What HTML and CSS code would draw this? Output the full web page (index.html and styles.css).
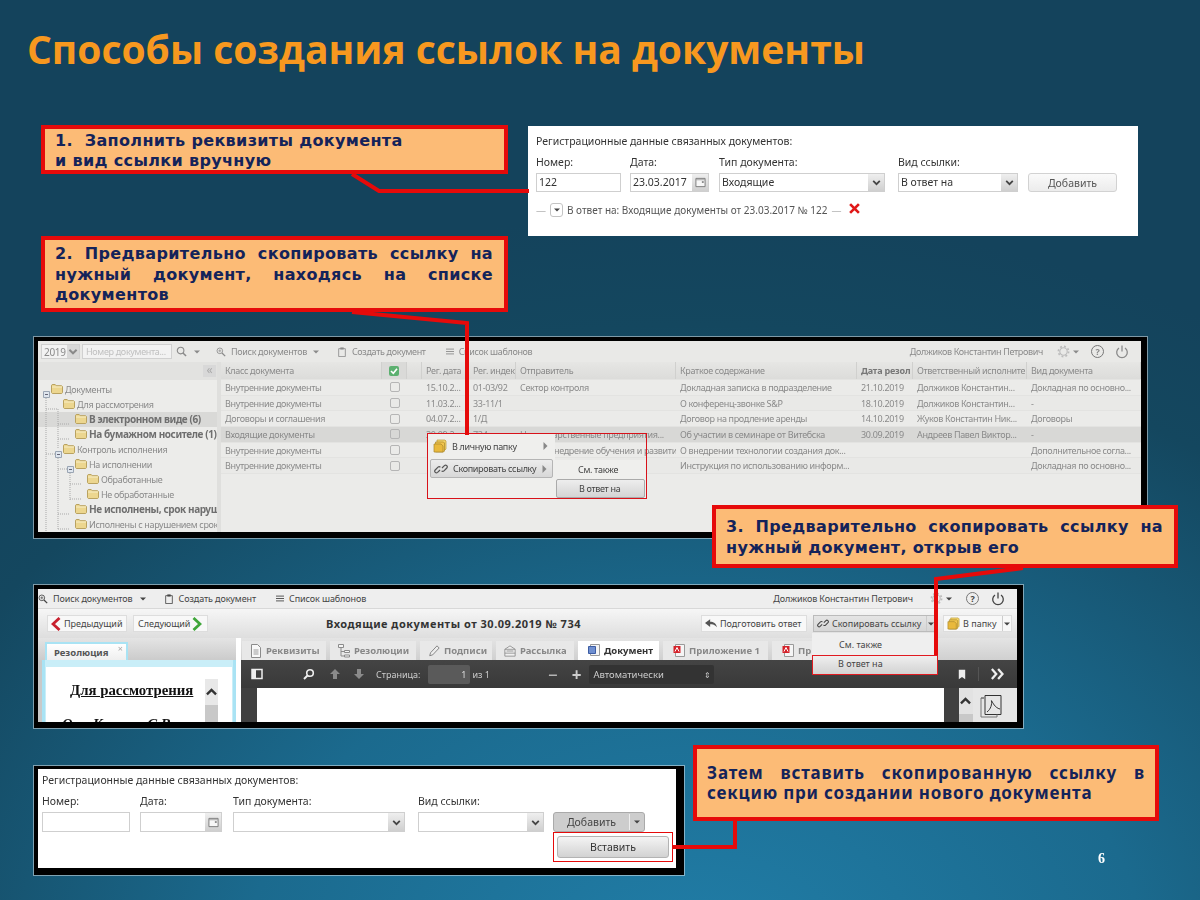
FILE: index.html
```html
<!DOCTYPE html>
<html lang="ru">
<head>
  <meta charset="UTF-8">
  <title>Способы создания ссылок на документы</title>
  <link rel="stylesheet" href="styles.css">
</head>
<body>
  <!-- shared icons -->
  <svg class="icon-defs" aria-hidden="true">
    <symbol id="i-folder" viewBox="0 0 12 10"><path d="M.5 2V1.2L1.2.5h3l1 1.2h5.3l1 .8v6.2l-.8.8H1.3l-.8-.8z" fill="#ecd68f" stroke="#b9a260"/><path d="M1 3h10" stroke="#f7edc6"/></symbol>
    <symbol id="i-down" viewBox="0 0 10 10"><path d="M2 3.5 5 6.5 8 3.5" fill="none" stroke="currentColor" stroke-width="1.6"/></symbol>
    <symbol id="i-caret" viewBox="0 0 6 4"><path d="M0 .5h6L3 3.5z" fill="currentColor"/></symbol>
    <symbol id="i-right" viewBox="0 0 5 8"><path d="M.5 0 4.5 4 .5 8z" fill="currentColor"/></symbol>
    <symbol id="i-search" viewBox="0 0 12 12"><circle cx="5" cy="5" r="3.6" fill="none" stroke="currentColor" stroke-width="1.2"/><path d="M7.6 7.6 11 11" stroke="currentColor" stroke-width="1.6"/></symbol>
    <symbol id="i-zoom" viewBox="0 0 12 12"><circle cx="4.6" cy="4.6" r="3.4" fill="none" stroke="currentColor"/><path d="M7.2 7.2 11 11" stroke="currentColor" stroke-width="1.5"/><path d="M2.8 4.6h3.6M4.6 2.8v3.6" stroke="currentColor" stroke-width=".8"/></symbol>
    <symbol id="i-note" viewBox="0 0 10 12"><path d="M1 2h8v9.500H1z" fill="none" stroke="currentColor"/><path d="M3 .5h4v2.500H3z" fill="currentColor"/></symbol>
    <symbol id="i-list" viewBox="0 0 10 8"><path d="M0 1h10M0 4h10M0 7h10" stroke="currentColor" stroke-width="1.100"/></symbol>
    <symbol id="i-cal" viewBox="0 0 12 12"><path d="M1 1.500h10v9H1z" fill="#f7f7f7" stroke="#777"/><path d="M1 3h10" stroke="#999"/><path d="M7.500 4.500h2v2h-2z" fill="#888"/></symbol>
    <symbol id="i-link" viewBox="0 0 14 14"><g fill="none" stroke="currentColor" stroke-width="1.200"><path d="M6 8 3.600 10.400a1.700 1.700 0 0 1-2.400-2.400l2.800-2.800a1.700 1.700 0 0 1 2.400 0"/><path d="M8 6l2.400-2.400a1.700 1.700 0 0 1 2.400 2.400L10 8.800a1.700 1.700 0 0 1-2.400 0"/></g></symbol>
    <symbol id="i-papers" viewBox="0 0 14 14"><path d="M4 1h8l1 1v8l-1 1H4z" fill="#f6d669" stroke="#b89a3a" stroke-width=".7"/><path d="M2.500 3h8l1 1v8l-1 1h-8z" fill="#f0c44d" stroke="#a9882c" stroke-width=".7"/><path d="M1 5h7l2 2v6H1z" fill="#e9b93c" stroke="#a9882c" stroke-width=".7"/></symbol>
    <symbol id="i-gear" viewBox="0 0 14 14"><circle cx="7" cy="7" r="4" fill="none" stroke="currentColor" stroke-width="1.200"/><circle cx="7" cy="7" r="5.500" fill="none" stroke="currentColor" stroke-width="1.800" stroke-dasharray="2 2.300"/></symbol>
    <symbol id="i-power" viewBox="0 0 14 14"><path d="M4 3a5.300 5.300 0 1 0 6 0" fill="none" stroke="currentColor" stroke-width="1.300"/><path d="M7 .5v6" stroke="currentColor" stroke-width="1.300"/></symbol>
    <symbol id="i-reply" viewBox="0 0 14 10"><path d="M6 0 0 4.500 6 9V6c3 0 5.500.5 8 3.500C13 5 10 3 6 3z" fill="currentColor"/></symbol>
    <symbol id="i-doc" viewBox="0 0 12 14"><path d="M1.500.5h6l3 3v10h-9z" fill="#f8f8f8" stroke="#8b8b8b"/><path d="M3.500 6h5M3.500 8h5M3.500 10h5" stroke="#9b9b9b"/></symbol>
    <symbol id="i-tree" viewBox="0 0 12 14"><path d="M.5.500h5v3h-5zM6.500 6.500h5v2h-5zM6.500 11h5v2h-5z" fill="#f4f4f4" stroke="#8b8b8b"/><path d="M3 3.500V12h3.500M3 7.500h3.500" fill="none" stroke="#8b8b8b"/></symbol>
    <symbol id="i-pen" viewBox="0 0 14 14"><path d="M2 12.500 3 9l7.500-8 2.500 2.500L5.500 11.500z" fill="#ededed" stroke="#777"/></symbol>
    <symbol id="i-mail" viewBox="0 0 14 14"><path d="M1 5 7 1l6 4v8H1z" fill="#f1f1f1" stroke="#8b8b8b"/><path d="M1 5h12M3 7h8M1 9.500h12" stroke="#8b8b8b"/></symbol>
    <symbol id="i-word" viewBox="0 0 12 14"><path d="M2.500.5h9v11h-9z" fill="#f5f5f5" stroke="#9a9a9a"/><path d="M.5 2.500h7v7h-7z" fill="#6f8fd0" stroke="#3c5ca3"/></symbol>
    <symbol id="i-pdf" viewBox="0 0 12 14"><path d="M2.500.5h9v12h-9z" fill="#f5f5f5" stroke="#9a9a9a"/><path d="M.5 2h7v7h-7z" fill="#d4222a"/><path d="M2 7.500 4 3.500 6 7.500" fill="none" stroke="#fff"/></symbol>
  </svg>

  <div class="slide">
    <h1 class="slide-title">Способы создания ссылок на документы</h1>

    <!-- screen: form filled by hand -->
    <div class="shot shot-form-top">
      <div class="link-form form-top">
        <div class="form-title">Регистрационные данные связанных документов:</div>
        <div class="fields">
          <div class="field"><label>Номер:</label><div class="box num">122</div></div>
          <div class="field"><label>Дата:</label><div class="box date"><span class="box-text">23.03.2017</span><span class="box-btn"><svg><use href="#i-cal"/></svg></span></div></div>
          <div class="field"><label>Тип документа:</label><div class="box type"><span class="box-text">Входящие</span><span class="box-btn"><svg><use href="#i-down"/></svg></span></div></div>
          <div class="field"><label>Вид ссылки:</label><div class="box kind"><span class="box-text">В ответ на</span><span class="box-btn"><svg><use href="#i-down"/></svg></span></div></div>
          <div class="field"><label>&nbsp;</label><div class="form-btn">Добавить</div></div>
        </div>
        <div class="link-line">
          <span class="dash">—</span>
          <span class="mini-btn"><svg><use href="#i-caret"/></svg></span>
          <span>В ответ на: Входящие документы от 23.03.2017 № 122</span>
          <span class="dash">—</span>
          <svg class="remove" viewBox="0 0 10 10"><path d="M1 1 9 9M9 1 1 9" stroke="#e01818" stroke-width="2.400"/></svg>
        </div>
      </div>
    </div>

    <!-- screen: document list -->
    <div class="shot shot-list">
      <div class="toolbar list-toolbar">
        <div class="tb-year"><span>2019</span><span class="tb-year-btn"><svg><use href="#i-down"/></svg></span></div>
        <div class="tb-input">Номер документа...</div>
        <svg class="tb-search"><use href="#i-search"/></svg>
        <svg class="caret tb-c1"><use href="#i-caret"/></svg>
        <svg class="tb-ico tb-i1"><use href="#i-zoom"/></svg><span>Поиск документов</span>
        <svg class="caret tb-c2"><use href="#i-caret"/></svg>
        <svg class="tb-ico tb-i2"><use href="#i-note"/></svg><span>Создать документ</span>
        <svg class="tb-ico tb-i3"><use href="#i-list"/></svg><span>Список шаблонов</span>
        <span class="tb-user">Должиков Константин Петрович</span>
        <svg class="tb-gear"><use href="#i-gear"/></svg>
        <svg class="caret tb-c3"><use href="#i-caret"/></svg>
        <span class="tb-help">?</span>
        <svg class="tb-power"><use href="#i-power"/></svg>
      </div>
      <div class="list-body">
        <div class="tree">
          <div class="tree-head"><span class="collapse">«</span></div>
          <div class="tree-row lvl0"><svg><use href="#i-folder"/></svg>Документы</div>
          <div class="tree-row lvl1"><svg><use href="#i-folder"/></svg>Для рассмотрения</div>
          <div class="tree-row lvl2 bold sel"><svg><use href="#i-folder"/></svg>В электронном виде (6)</div>
          <div class="tree-row lvl2 bold"><svg><use href="#i-folder"/></svg>На бумажном носителе (1)</div>
          <div class="tree-row lvl1"><svg><use href="#i-folder"/></svg>Контроль исполнения</div>
          <div class="tree-row lvl2"><svg><use href="#i-folder"/></svg>На исполнении</div>
          <div class="tree-row lvl3"><svg><use href="#i-folder"/></svg>Обработанные</div>
          <div class="tree-row lvl3"><svg><use href="#i-folder"/></svg>Не обработанные</div>
          <div class="tree-row lvl2 bold"><svg><use href="#i-folder"/></svg>Не исполнены, срок наруш</div>
          <div class="tree-row lvl2"><svg><use href="#i-folder"/></svg>Исполнены с нарушением срок</div>
          <svg class="tree-lines" viewBox="0 0 60 170">
            <path d="M8 12V170M8 27h12M20 27V66M20 42h12M20 57h12M8 72h12M20 72V148M20 87h12M32 87V118M32 102h12M32 117h12M20 132h12M20 147h12" fill="none" stroke="#a9a9a9" stroke-dasharray="1 1"/>
            <path d="M5.500 9.500h6v6h-6zM17.500 69.500h6v6h-6zM29.500 84.500h6v6h-6z" fill="#dfe6ee" stroke="#9aa5b3"/>
            <path d="M7 12.500h3M19 72.500h3M31 87.500h3" stroke="#667"/>
          </svg>
        </div>
        <div class="grid">
          <div class="grid-row grid-head">
            <span>Класс документа</span><span class="check-cell"><i class="check on"><svg viewBox="0 0 10 10"><path d="M2 5 4.300 7.300 8 2.800" fill="none" stroke="#fff" stroke-width="1.600"/></svg></i></span><span></span><span>Рег. дата</span><span>Рег. индек</span><span>Отправитель</span><span>Краткое содержание</span><span class="head-strong">Дата резол</span><span>Ответственный исполните</span><span>Вид документа</span>
          </div>
          <div class="grid-row">
            <span>Внутренние документы</span><span class="check-cell"><i class="check"></i></span><span></span><span>15.10.2...</span><span>01-03/92</span><span>Сектор контроля</span><span>Докладная записка в подразделение</span><span>21.10.2019</span><span>Должиков Константин...</span><span>Докладная по основно...</span>
          </div>
          <div class="grid-row alt">
            <span>Внутренние документы</span><span class="check-cell"><i class="check"></i></span><span></span><span>11.03.2...</span><span>33-11/1</span><span></span><span>О конференц-звонке S&amp;P</span><span>18.10.2019</span><span>Должиков Константин...</span><span>-</span>
          </div>
          <div class="grid-row">
            <span>Договоры и соглашения</span><span class="check-cell"><i class="check"></i></span><span></span><span>04.07.2...</span><span>1/Д</span><span></span><span>Договор на продление аренды</span><span>14.10.2019</span><span>Жуков Константин Ник...</span><span>Договоры</span>
          </div>
          <div class="grid-row current">
            <span>Входящие документы</span><span class="check-cell"><i class="check"></i></span><span></span><span>30.09.2...</span><span>734</span><span>Негосударственные предприятия...</span><span>Об участии в семинаре от Витебска</span><span>30.09.2019</span><span>Андреев Павел Виктор...</span><span>-</span>
          </div>
          <div class="grid-row">
            <span>Внутренние документы</span><span class="check-cell"><i class="check"></i></span><span></span><span></span><span></span><span>Центр: внедрение обучения и развития...</span><span>О внедрении технологии создания док...</span><span></span><span></span><span>Дополнительное согла...</span>
          </div>
          <div class="grid-row alt">
            <span>Внутренние документы</span><span class="check-cell"><i class="check"></i></span><span></span><span></span><span></span><span></span><span>Инструкция по использованию информ...</span><span></span><span></span><span>Докладная по основно...</span>
          </div>
        </div>
      </div>
      <!-- context menu -->
      <div class="ctx-outline">
        <div class="ctx-menu">
          <div class="ctx-item"><svg class="ctx-ico"><use href="#i-papers"/></svg><span>В личную папку</span><svg class="ctx-arrow"><use href="#i-right"/></svg></div>
          <div class="ctx-item hover"><svg class="ctx-ico link"><use href="#i-link"/></svg><span>Скопировать ссылку</span><svg class="ctx-arrow"><use href="#i-right"/></svg></div>
        </div>
        <div class="ctx-sub">
          <div class="ctx-sub-item">См. также</div>
          <div class="ctx-sub-item hover">В ответ на</div>
        </div>
      </div>
    </div>

    <!-- screen: opened document -->
    <div class="shot shot-doc">
      <div class="toolbar doc-toolbar">
        <svg class="tb-ico"><use href="#i-zoom"/></svg><span>Поиск документов</span>
        <svg class="caret tb-c2"><use href="#i-caret"/></svg>
        <svg class="tb-ico tb-i2"><use href="#i-note"/></svg><span>Создать документ</span>
        <svg class="tb-ico tb-i3"><use href="#i-list"/></svg><span>Список шаблонов</span>
        <span class="tb-user">Должиков Константин Петрович</span>
        <svg class="tb-gear"><use href="#i-gear"/></svg>
        <svg class="caret tb-c3"><use href="#i-caret"/></svg>
        <span class="tb-help">?</span>
        <svg class="tb-power"><use href="#i-power"/></svg>
      </div>
      <div class="doc-head">
        <div class="nav-btn prev"><svg viewBox="0 0 10 14"><path d="M8.500 1 2 7l6.500 6" fill="none" stroke="#c8202e" stroke-width="2.800"/></svg>Предыдущий</div>
        <div class="nav-btn next">Следующий<svg viewBox="0 0 10 14"><path d="M1.500 1 8 7l-6.500 6" fill="none" stroke="#3fa63a" stroke-width="2.800"/></svg></div>
        <div class="doc-title">Входящие документы от 30.09.2019 № 734</div>
        <div class="act-btn reply"><svg><use href="#i-reply"/></svg>Подготовить ответ</div>
        <div class="act-btn copy"><svg><use href="#i-link"/></svg><span>Скопировать ссылку</span><b><svg class="caret"><use href="#i-caret"/></svg></b></div>
        <div class="act-btn tofolder"><svg><use href="#i-papers"/></svg><span>В папку</span><b><svg class="caret"><use href="#i-caret"/></svg></b></div>
      </div>
      <div class="doc-body">
        <div class="res-pane">
          <div class="res-tabs"><div class="res-tab">Резолюция<span class="res-close">×</span></div></div>
          <div class="res-frame">
            <div class="res-page">
              <div class="res-text">
                <div class="res-title">Для рассмотрения</div>
                <div class="res-from">От: Колесов С.В.</div>
              </div>
              <div class="res-scroll"><svg viewBox="0 0 10 10"><path d="M1.500 6.500 5 3l3.500 3.500" fill="none" stroke="#333" stroke-width="1.800"/></svg><i></i></div>
            </div>
          </div>
        </div>
        <div class="doc-pane">
          <div class="doc-tabs">
            <div class="doc-tab w1"><svg><use href="#i-doc"/></svg>Реквизиты</div>
            <div class="doc-tab w2"><svg><use href="#i-tree"/></svg>Резолюции</div>
            <div class="doc-tab w3"><svg><use href="#i-pen"/></svg>Подписи</div>
            <div class="doc-tab w4"><svg><use href="#i-mail"/></svg>Рассылка</div>
            <div class="doc-tab w5 active"><svg><use href="#i-word"/></svg>Документ</div>
            <div class="doc-tab w6"><svg><use href="#i-pdf"/></svg>Приложение 1</div>
            <div class="doc-tab w7"><svg><use href="#i-pdf"/></svg>При</div>
          </div>
          <div class="pdf-bar">
            <svg class="pdf-side" viewBox="0 0 12 12"><path d="M1 1.500h10v9H1z" fill="none" stroke="#eee" stroke-width="1.500"/><path d="M1 1.500h4v9H1z" fill="#eee"/></svg>
            <svg class="pdf-find" viewBox="0 0 12 12"><circle cx="7" cy="5" r="3.300" fill="none" stroke="#eee" stroke-width="1.600"/><path d="M4.500 7.500 1 11" stroke="#eee" stroke-width="2"/></svg>
            <svg class="pdf-up" viewBox="0 0 12 12"><path d="M6 1 11 6H8v5H4V6H1z" fill="#8a8a8a"/></svg>
            <svg class="pdf-down" viewBox="0 0 12 12"><path d="M6 11 11 6H8V1H4v5H1z" fill="#8a8a8a"/></svg>
            <span class="pdf-label">Страница:</span>
            <span class="pdf-page">1</span>
            <span class="pdf-of">из 1</span>
            <span class="pdf-minus">−</span>
            <span class="pdf-plus">+</span>
            <span class="pdf-zoom">Автоматически<i>⇕</i></span>
            <svg class="pdf-mark" viewBox="0 0 10 12"><path d="M1 0h8v12L5 9l-4 3z" fill="#eee"/></svg>
            <svg class="pdf-more" viewBox="0 0 12 10"><path d="M1.500 1 5 5 1.500 9M6.500 1 10 5 6.500 9" fill="none" stroke="#eee" stroke-width="1.800"/></svg>
          </div>
          <div class="pdf-view">
            <div class="pdf-sheet"></div>
            <div class="pdf-scroll"><svg viewBox="0 0 10 10"><path d="M1.500 6.500 5 3l3.500 3.500" fill="none" stroke="#333" stroke-width="1.800"/></svg><i></i></div>
            <div class="pdf-thumbs">
              <svg viewBox="0 0 22 24"><path d="M1 4h3M5 1.500h16v19H5z" fill="none" stroke="#333"/><path d="M1 4v19h16v-2.500" fill="none" stroke="#777"/><path d="M7 18c4-3 5-8 4.500-11C11 4.500 14 14 20 15" fill="none" stroke="#333"/></svg>
            </div>
          </div>
        </div>
      </div>
      <!-- copy link dropdown -->
      <div class="copy-menu">
        <div class="copy-item">См. также</div>
        <div class="copy-item hover">В ответ на</div>
      </div>
    </div>

    <!-- screen: empty form with paste -->
    <div class="shot shot-form-bottom">
      <div class="link-form form-bottom">
        <div class="form-title">Регистрационные данные связанных документов:</div>
        <div class="fields">
          <div class="field"><label>Номер:</label><div class="box num"></div></div>
          <div class="field"><label>Дата:</label><div class="box date"><span class="box-text"></span><span class="box-btn"><svg><use href="#i-cal"/></svg></span></div></div>
          <div class="field"><label>Тип документа:</label><div class="box type"><span class="box-text"></span><span class="box-btn"><svg><use href="#i-down"/></svg></span></div></div>
          <div class="field"><label>Вид ссылки:</label><div class="box kind"><span class="box-text"></span><span class="box-btn"><svg><use href="#i-down"/></svg></span></div></div>
          <div class="field"><label>&nbsp;</label><div class="form-btn split"><span>Добавить</span><b><svg class="caret"><use href="#i-caret"/></svg></b></div></div>
        </div>
      </div>
      <div class="paste-outline"><div class="paste-btn">Вставить</div></div>
    </div>

    <!-- callouts -->
    <div class="callout c1">1.&nbsp; Заполнить реквизиты документа<br>и вид ссылки вручную</div>
    <div class="callout c2">2. Предварительно скопировать ссылку на нужный документ, находясь на списке документов</div>
    <div class="callout c3">3. Предварительно скопировать ссылку на нужный документ, открыв его</div>
    <div class="callout c4">Затем вставить скопированную ссылку в секцию при создании нового документа</div>

    <svg class="connectors" viewBox="0 0 1200 900">
      <polyline points="352,174 379,191 529,191"/>
      <polyline points="352,312 467,323 467,435"/>
      <polyline points="1023,568 936,579 936,655"/>
      <polyline points="735,820 735,847 672,847"/>
    </svg>

    <div class="page-num">6</div>
  </div>
</body>
</html>
```

FILE: styles.css
```css
* {
  margin: 0;
  padding: 0;
  box-sizing: border-box;
}
body {
  font-family: "Noto Sans", sans-serif;
  background: #133f58;
}
.icon-defs {
  display: none;
}
svg {
  display: block;
  flex: none;
}
i {
  font-style: normal;
}

.slide {
  position: relative;
  width: 1200px;
  height: 900px;
  overflow: hidden;
  background: radial-gradient(ellipse 1000px 760px at 58% 108%, #217ea8 0%, #1b6a8e 45%, #14475f 85%, #14435c 100%);
}
.slide-title {
  position: absolute;
  left: 27px;
  top: 23px;
  font-family: "Open Sans", sans-serif;
  font-size: 39px;
  font-weight: 700;
  line-height: 52px;
  color: #f7981f;
  white-space: nowrap;
}
.page-num {
  position: absolute;
  left: 1098px;
  top: 851px;
  font-family: "Liberation Serif", serif;
  font-size: 14px;
  font-weight: bold;
  color: #fff;
}

/* callouts */
.callout {
  position: absolute;
  background: #fcbb76;
  border: 4px solid #e60a0a;
  color: #14235a;
  font-family: "DejaVu Sans", sans-serif;
  font-size: 16px;
  font-weight: bold;
  letter-spacing: .35px;
  line-height: 20.500px;
  padding: 0 11px 0 10px;
  text-align: justify;
}
.c1 {
  left: 41px;
  top: 125px;
  width: 467px;
  height: 49px;
  padding-top: 2px;
  line-height: 20px;
  text-align: left;
}
.c2 {
  left: 41px;
  top: 236px;
  width: 467px;
  height: 76px;
  padding-top: 4px;
}
.c3 {
  left: 712px;
  top: 505px;
  width: 466px;
  height: 63px;
  padding-top: 8px;
}
.c4 {
  left: 693px;
  top: 745px;
  width: 466px;
  height: 76px;
  padding: 14px 10px 0;
  font-family: "Noto Sans", sans-serif;
  font-size: 17px;
  letter-spacing: .8px;
  line-height: 20px;
}
.connectors {
  position: absolute;
  inset: 0;
  width: 1200px;
  height: 900px;
  pointer-events: none;
}
.connectors polyline {
  fill: none;
  stroke: #e60a0a;
  stroke-width: 4;
}

/* screenshots */
.shot {
  position: absolute;
  overflow: hidden;
  background: #ebebe9;
  border: solid #000;
  border-width: 4px 6px 6px 4px;
  box-shadow: 0 0 0 1px rgba(255, 255, 255, .45);
  font-size: 9px;
  color: #8a8a8a;
  filter: blur(.3px);
}
.shot-form-top {
  left: 528px;
  top: 126px;
  width: 610px;
  height: 110px;
  border: 0;
  background: #fff;
  box-shadow: none;
}
.shot-list {
  left: 34px;
  top: 337px;
  width: 1113px;
  height: 201px;
  letter-spacing: -.33px;
}
.shot-doc {
  left: 34px;
  top: 585px;
  width: 989px;
  height: 143px;
  color: #444;
}
.shot-form-bottom {
  left: 34px;
  top: 766px;
  width: 650px;
  height: 109px;
  background: #fff;
  border-width: 3px 8px 7px 4px;
}

/* link form */
.link-form {
  color: #333;
}
.form-top {
  padding: 8px 8px 0;
  font-size: 10.500px;
}
.form-bottom {
  padding: 4px 4px 0;
  font-size: 10.500px;
}
.form-title {
  line-height: 14px;
}
.fields {
  display: grid;
  margin-top: 7px;
}
.form-top .fields {
  grid-template-columns: 94px 89px 179px 130px auto;
}
.form-bottom .fields {
  grid-template-columns: 98px 93px 185px 135px auto;
}
.field label {
  display: block;
  line-height: 14px;
  margin-bottom: 4px;
}
.box {
  display: flex;
  height: 20px;
  border: 1px solid #cfcfcf;
  background: #fff;
  line-height: 18px;
  padding-left: 2px;
}
.form-top .box {
  height: 19px;
  line-height: 17px;
}
.form-top .num { width: 85px; }
.form-top .date { width: 79px; }
.form-top .type { width: 166px; }
.form-top .kind { width: 120px; }
.form-bottom .num { width: 88px; }
.form-bottom .date { width: 82px; }
.form-bottom .type { width: 172px; }
.form-bottom .kind { width: 126px; }
.box-text {
  flex: 1;
}
.box-btn {
  width: 16px;
  display: flex;
  align-items: center;
  justify-content: center;
  background: linear-gradient(#efefef, #cfcfcf);
  color: #444;
}
.box-btn svg {
  width: 11px;
  height: 11px;
}
.form-btn {
  display: flex;
  align-items: center;
  justify-content: center;
  width: 89px;
  height: 19px;
  border: 1px solid #d2d2d2;
  border-radius: 3px;
  background: linear-gradient(#fafafa, #ececec);
  color: #555;
}
.form-btn.split {
  width: 92px;
  height: 20px;
  background: #cdcdcd;
  border-color: #aaa;
  color: #444;
}
.form-btn.split span {
  flex: 1;
  text-align: center;
}
.form-btn.split b {
  width: 15px;
  height: 16px;
  display: flex;
  align-items: center;
  justify-content: center;
  border-left: 1px solid #eee;
}
.link-line {
  display: flex;
  align-items: center;
  gap: 4px;
  margin-top: 8px;
  height: 20px;
  font-size: 10px;
  color: #555;
}
.dash {
  color: #bbb;
}
.mini-btn {
  width: 13px;
  height: 14px;
  display: flex;
  align-items: center;
  justify-content: center;
  border: 1px solid #c4c4c4;
  border-radius: 3px;
  color: #444;
}
.caret {
  width: 6px;
  height: 4px;
  color: currentColor;
}
.mini-btn svg {
  width: 6px;
  height: 4px;
}
.remove {
  width: 11px;
  height: 11px;
  margin: -3px 0 0 3px;
}
.paste-outline {
  position: absolute;
  left: 515px;
  top: 63px;
  width: 120px;
  height: 30px;
  border: 1.500px solid #e60a0a;
  padding: 3px;
}
.paste-btn {
  display: flex;
  align-items: center;
  justify-content: center;
  height: 100%;
  width: 112px;
  border: 1px solid #b3b3b3;
  border-radius: 3px;
  background: linear-gradient(#f4f4f4, #d2d2d2);
  font-size: 10.500px;
  color: #333;
}

/* app toolbars */
.toolbar {
  display: flex;
  align-items: center;
  height: 21px;
  white-space: nowrap;
}
.tb-ico {
  width: 10px;
  height: 10px;
  margin-right: 5px;
}
.tb-gear {
  width: 13px;
  height: 13px;
  color: #bbb;
}
.tb-help {
  display: flex;
  align-items: center;
  justify-content: center;
  width: 13px;
  height: 13px;
  border: 1.300px solid #777;
  border-radius: 50%;
  font-size: 9px;
  font-weight: bold;
  line-height: 1;
}
.tb-power {
  width: 14px;
  height: 14px;
}
.list-toolbar {
  background: #e9e9e7;
  padding-left: 3px;
}
.tb-year {
  display: flex;
  align-items: center;
  width: 39px;
  height: 15px;
  border: 1px solid #d0d0d0;
  background: #f2f2f2;
  padding-left: 2px;
  font-size: 10px;
}
.tb-year span:first-child {
  flex: 1;
}
.tb-year-btn {
  width: 12px;
  height: 13px;
  background: #d8d8d8;
}
.tb-year-btn svg {
  width: 12px;
  height: 13px;
}
.tb-input {
  width: 90px;
  height: 15px;
  margin-left: 2px;
  padding-left: 3px;
  line-height: 13px;
  border: 1px solid #d0d0d0;
  background: #f2f2f2;
  color: #c0c0c0;
}
.tb-search {
  width: 11px;
  height: 11px;
  margin-left: 4px;
}
.tb-c1 { margin-left: 7px; }
.list-toolbar .tb-i1 { margin-left: 16px; }
.tb-c2 { margin-left: 6px; }
.tb-i2 { margin-left: 18px; }
.tb-i3 { margin: 0 5px 0 20px; width: 8px; height: 7px; }
.tb-user { margin-left: auto; }
.list-toolbar .tb-gear { margin-left: 14px; }
.list-toolbar .tb-c3 { margin-left: 3px; }
.list-toolbar .tb-help { margin-left: 12px; }
.list-toolbar .tb-power { margin: 0 12px 0 11px; }

/* list: tree + grid */
.list-body {
  display: flex;
  height: 171px;
}
.tree {
  position: relative;
  width: 183px;
  flex: none;
  overflow: hidden;
  background: #ececea;
  border-right: 4px solid #dfdfdd;
}
.tree-head {
  display: flex;
  justify-content: flex-end;
  align-items: flex-start;
  height: 19.500px;
  padding: 3px 1px 0 0;
  background: linear-gradient(#e2e2e0, #e2e2e0 18px, #ececea 18px);
}
.collapse {
  width: 13px;
  height: 12px;
  line-height: 10px;
  text-align: center;
  background: #d8d8d8;
  color: #aaa;
  font-size: 12px;
}
.tree-row {
  display: flex;
  align-items: center;
  height: 15px;
  gap: 2px;
  white-space: nowrap;
  position: relative;
}
.tree-row svg {
  width: 12px;
  height: 10px;
}
.lvl0 { padding-left: 13px; }
.lvl1 { padding-left: 25px; }
.lvl2 { padding-left: 37px; }
.lvl3 { padding-left: 49px; }
.bold {
  font-size: 10px;
  font-weight: bold;
  letter-spacing: -.4px;
  color: #6f6f6f;
}
.tree-row.sel {
  background: #d9d9d7;
}
.tree-lines {
  position: absolute;
  left: 0;
  top: 19.500px;
  width: 60px;
  height: 170px;
  pointer-events: none;
}
.grid {
  flex: 1;
  background: #ebebe9;
}
.grid-row {
  display: grid;
  grid-template-columns: 161px 25px 15px 47px 47px 160px 181px 56px 114px 114px;
  height: 15.700px;
  line-height: 15.700px;
  border-bottom: 1px solid #e3e3e1;
  white-space: nowrap;
}
.grid-row.alt {
  background: #e9e9e7;
}
.grid-row.current {
  background: #d8d8d6;
}
.grid-row > span {
  overflow: hidden;
  padding-left: 4px;
}
.grid-head {
  height: 18px;
  line-height: 18px;
  background: linear-gradient(#e6e6e4, #dcdcda);
}
.grid-head > span {
  border-right: 1px solid #d0d0ce;
}
.grid-head .head-strong {
  font-weight: bold;
  color: #777;
  letter-spacing: -.2px;
}
.grid-head .check-cell {
  background: #dadad8;
}
.grid-row > .check-cell {
  display: flex;
  align-items: center;
  justify-content: center;
  padding: 0;
}
.check {
  display: block;
  width: 10px;
  height: 10px;
  border: 1px solid #b5b5b5;
  border-radius: 2px;
}
.check.on {
  background: #5cb070;
  border: 0;
}
.check.on svg {
  width: 10px;
  height: 10px;
}

/* context menu */
.ctx-outline {
  position: absolute;
  left: 389px;
  top: 92px;
  width: 220px;
  height: 66px;
  border: 1.500px solid #d8121a;
}
.ctx-menu {
  position: absolute;
  left: 0;
  top: 0;
  width: 127px;
  height: 64px;
  background: #efefed;
  padding-top: 3px;
}
.ctx-item {
  display: flex;
  align-items: center;
  height: 19px;
  margin: 0 2px 3px;
  padding-left: 22px;
  position: relative;
  color: #444;
}
.ctx-item.hover {
  background: linear-gradient(#ececec, #d8d8d8);
  border: 1px solid #b5b5b5;
  border-radius: 2px;
}
.ctx-ico {
  position: absolute;
  left: 3px;
  top: 2px;
  width: 14px;
  height: 14px;
}
.ctx-ico.link {
  color: #555;
}
.ctx-arrow {
  position: absolute;
  right: 5px;
  top: 5px;
  width: 5px;
  height: 8px;
  color: #888;
}
.ctx-sub {
  position: absolute;
  left: 127px;
  top: 26px;
  width: 91px;
  height: 38px;
  background: #efefed;
  color: #444;
}
.ctx-sub-item {
  height: 19px;
  padding-left: 23px;
  line-height: 19px;
}
.ctx-sub-item.hover {
  width: 89px;
  margin-left: 1px;
  padding-left: 22px;
  border: 1px solid #aaa;
  border-radius: 2px;
  background: linear-gradient(#eee, #d4d4d4);
  line-height: 17px;
}

/* opened document */
.doc-toolbar {
  height: 20px;
  background: #eee;
  border-bottom: 1px solid #d8d8d8;
  font-size: 9px;
  letter-spacing: -.1px;
  padding-left: 0;
}
.doc-toolbar .tb-gear { margin-left: 17px; }
.doc-toolbar .tb-c3 { margin-left: 3px; }
.doc-toolbar .tb-help { margin-left: 14px; }
.doc-toolbar .tb-power { margin: 0 12px 0 12px; }
.doc-toolbar .tb-c2 { margin-left: 7px; }
.doc-toolbar .tb-i2 { margin-left: 18px; }
.doc-head {
  display: flex;
  align-items: center;
  height: 29px;
  background: linear-gradient(#f6f6f6, #dedede);
  padding-left: 9px;
  white-space: nowrap;
}
.nav-btn {
  display: flex;
  align-items: center;
  gap: 3px;
  height: 17px;
  padding: 0 3px;
  border: 1px solid #ddd;
  background: #f8f8f8;
}
.nav-btn svg {
  width: 10px;
  height: 14px;
}
.prev { width: 80px; }
.next { width: 75px; margin-left: 6px; padding-left: 4px; gap: 2px; }
.doc-title {
  margin-left: 118px;
  width: 375px;
  font-size: 11px;
  font-weight: bold;
  letter-spacing: .5px;
  color: #333;
}
.act-btn {
  display: flex;
  align-items: center;
  gap: 3px;
  height: 17px;
  border: 1px solid #ddd;
  background: #f8f8f8;
  padding-left: 3px;
}
.act-btn > svg {
  width: 12px;
  height: 11px;
}
.act-btn b {
  display: flex;
  align-items: center;
  justify-content: center;
  width: 9px;
  height: 15px;
  border-left: 1px solid #ccc;
}
.reply { width: 106px; }
.reply svg { color: #555; }
.copy {
  width: 123px;
  margin-left: 6px;
  background: linear-gradient(#e5e5e5, #d6d6d6);
  border-color: #bbb;
}
.copy span { flex: 1; }
.copy > svg { height: 13px; }
.tofolder {
  width: 69px;
  margin-left: 7px;
}
.tofolder span { flex: 1; }
.tofolder > svg { height: 13px; width: 13px; }
.copy-menu {
  position: absolute;
  left: 774px;
  top: 44px;
  width: 126px;
  height: 41px;
  background: #efefef;
  padding-top: 3px;
  z-index: 2;
}
.copy-item {
  height: 18px;
  padding-left: 27px;
  line-height: 18px;
  color: #444;
}
.copy-item.hover {
  height: 20px;
  margin-top: 1px;
  border: 1.500px solid #e01a20;
  background: linear-gradient(#efefef, #d2d2d2);
  padding-left: 25px;
  line-height: 16px;
}
.doc-body {
  display: flex;
  height: 85px;
}
.res-pane {
  width: 198px;
  flex: none;
  background: linear-gradient(#e4e4e4, #c9c9c9 24px);
  margin-right: 5px;
  box-shadow: 5px 0 0 #fff;
}
.res-tabs {
  height: 22px;
  padding: 4px 0 0 7px;
}
.res-tab {
  position: relative;
  width: 83px;
  height: 18px;
  border: solid #a9e3f4;
  border-width: 2px 2px 0;
  background: linear-gradient(#fff, #efefef);
  padding-left: 7px;
  font-size: 9.500px;
  font-weight: bold;
  line-height: 18px;
  color: #555;
}
.res-close {
  position: absolute;
  right: 3px;
  top: -4px;
  color: #aaa;
  font-size: 9px;
  font-weight: normal;
}
.res-frame {
  height: 64px;
  margin-left: 4px;
  padding: 7px 1px 0;
  border: solid #a9e3f4;
  border-width: 0 3px;
  background: #c9eef8;
}
.res-page {
  display: flex;
  background: #fff;
  height: 60px;
}
.res-text {
  flex: 1;
  padding: 15px 0 0 24px;
  font-family: "Liberation Serif", serif;
  font-size: 14.800px;
  font-weight: bold;
  color: #111;
}
.res-title {
  text-decoration: underline;
  line-height: 16px;
}
.res-from {
  margin: 18px 0 0 -8px;
  font-style: italic;
  line-height: 16px;
}
.res-scroll {
  width: 13px;
  margin: 12px 14px 0 0;
  background: #e8e8e8;
}
.res-scroll svg, .pdf-scroll svg {
  width: 13px;
  height: 13px;
  margin-top: 7px;
}
.res-scroll i {
  display: block;
  height: 30px;
  margin-top: 6px;
  background: #c8c8c8;
}
.doc-pane {
  flex: 1;
  min-width: 0;
}
.doc-tabs {
  display: flex;
  gap: 4px;
  height: 22px;
  padding: 3px 0 0 1px;
  background: linear-gradient(#e4e4e4, #d0d0d0);
  overflow: hidden;
  font-size: 9.500px;
  font-weight: bold;
  color: #888;
}
.doc-tab {
  display: flex;
  align-items: center;
  gap: 4px;
  padding-left: 8px;
  background: #e8e8e8;
  white-space: nowrap;
}
.doc-tab svg {
  width: 12px;
  height: 14px;
}
.doc-tab.active {
  background: #fff;
  color: #333;
}
.w1 { width: 84px; }
.w2 { width: 86px; }
.w3 { width: 72px; }
.w4 { width: 78px; }
.w5 { width: 81px; padding-left: 10px; }
.w6 { width: 105px; padding-left: 10px; }
.w7 { width: 60px; padding-left: 10px; }
.pdf-bar {
  display: flex;
  align-items: center;
  height: 28px;
  background: linear-gradient(#444, #393939);
  color: #ccc;
  white-space: nowrap;
}
.pdf-bar svg {
  width: 12px;
  height: 12px;
}
.pdf-side { margin-left: 10px; }
.pdf-find { margin-left: 40px; }
.pdf-up { margin-left: 14px; }
.pdf-down { margin-left: 12px; }
.pdf-label { margin-left: 11px; }
.pdf-page {
  width: 42px;
  height: 19px;
  margin-left: 8px;
  padding-right: 4px;
  border-radius: 2px;
  background: #5a5a5a;
  line-height: 19px;
  text-align: right;
  color: #ddd;
}
.pdf-of { margin-left: 2px; }
.pdf-minus { margin-left: 58px; font-size: 17px; }
.pdf-plus { margin-left: 14px; font-size: 17px; font-weight: bold; }
.pdf-zoom {
  display: flex;
  align-items: center;
  justify-content: space-between;
  width: 125px;
  height: 19px;
  margin-left: 8px;
  padding: 0 3px 0 4px;
  background: #333;
  border-radius: 2px;
  font-size: 9.500px;
}
.pdf-zoom i { font-size: 8px; }
.pdf-bar .pdf-mark { margin-left: 244px; width: 8px; height: 11px; }
.pdf-bar .pdf-more {
  margin-left: 12px;
  padding-left: 11px;
  width: 27px;
  height: 14px;
  border-left: 1px solid #555;
}
.pdf-view {
  display: flex;
  height: 35px;
  background: #404040;
  padding-left: 16px;
}
.pdf-sheet {
  width: 687px;
  background: #fff;
}
.pdf-scroll {
  width: 14px;
  margin-left: 15px;
  background: #e2e2e2;
}
.pdf-scroll i {
  display: block;
  height: 10px;
  margin-top: 6px;
  background: #c8c8c8;
}
.pdf-thumbs {
  flex: 1;
  background: #e6e6e6;
  padding: 6px 0 0 7px;
}
.pdf-thumbs svg {
  width: 22px;
  height: 24px;
}
```
